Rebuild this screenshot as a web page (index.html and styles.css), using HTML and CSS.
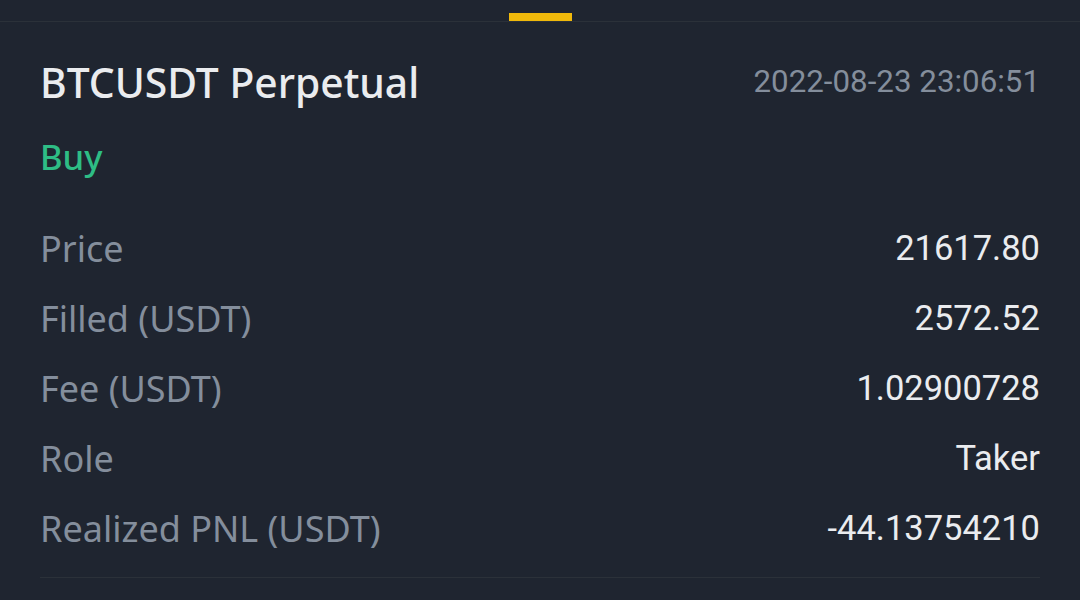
FILE: index.html
```html
<!DOCTYPE html>
<html>
<head>
<meta charset="utf-8">
<link rel="stylesheet" href="styles.css">
</head>
<body>
<div class="tabs"><div class="indicator"></div></div>
<div class="card">
  <div class="header">
    <div class="title">BTCUSDT Perpetual</div>
    <div class="date">2022-08-23 23:06:51</div>
  </div>
  <div class="side">Buy</div>
  <div class="rows">
    <div class="row"><span class="label">Price</span><span class="value">21617.80</span></div>
    <div class="row"><span class="label">Filled (USDT)</span><span class="value">2572.52</span></div>
    <div class="row"><span class="label">Fee (USDT)</span><span class="value">1.02900728</span></div>
    <div class="row"><span class="label">Role</span><span class="value">Taker</span></div>
    <div class="row"><span class="label">Realized PNL (USDT)</span><span class="value">-44.13754210</span></div>
  </div>
  <div class="divider"></div>
</div>
</body>
</html>
```
FILE: styles.css
```css
html, body {
  margin: 0;
  padding: 0;
  background: #1f2530;
  width: 1080px;
  height: 600px;
  overflow: hidden;
  font-family: "Noto Sans", "Liberation Sans", sans-serif;
}
.tabs {
  height: 21px;
  border-bottom: 1px solid #2b3139;
  display: flex;
  justify-content: center;
  align-items: flex-end;
}
.indicator {
  width: 63px;
  height: 8px;
  background: #f0b90b;
  margin-left: 1px;
}
.card {
  padding: 0 40px;
}
.header {
  margin-top: 32px;
  height: 56px;
  display: flex;
  justify-content: space-between;
  align-items: center;
}
.title {
  font-size: 40.8px;
  font-weight: 500;
  color: #eaecef;
  line-height: 56px;
}
.date {
  font-family: Roboto, "Noto Sans", sans-serif;
  font-size: 31.3px;
  color: #848e9c;
  line-height: 56px;
}
.side {
  margin-top: 27px;
  height: 40px;
  line-height: 40px;
  font-size: 34.5px;
  font-weight: 500;
  color: #2ebd85;
}
.rows {
  margin-top: 36px;
}
.row {
  height: 70px;
  display: flex;
  justify-content: space-between;
  align-items: center;
}
.label {
  font-size: 36px;
  color: #848e9c;
}
.value {
  font-family: Roboto, "Noto Sans", sans-serif;
  font-size: 34.5px;
  color: #eaecef;
}
.divider {
  margin-top: 14px;
  border-top: 1px solid #2b3139;
}
```
